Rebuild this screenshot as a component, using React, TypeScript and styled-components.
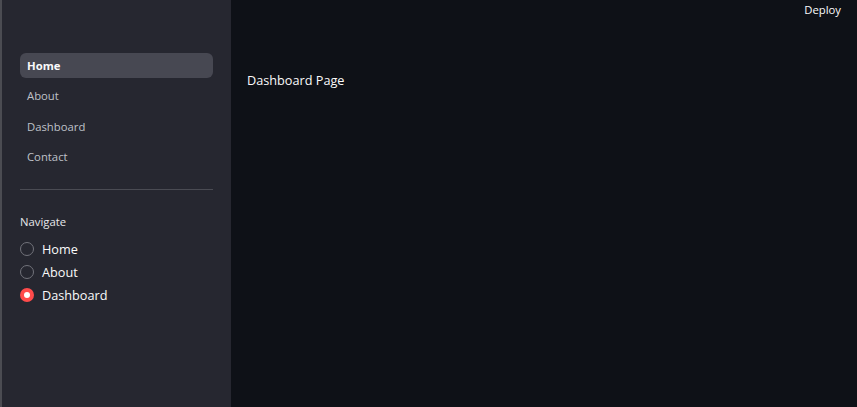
import styled, { createGlobalStyle } from 'styled-components';

const GlobalStyle = createGlobalStyle`
	html, body {
		margin: 0;
		padding: 0;
		height: 100%;
		background: #0e1117;
	}
	#root {
		height: 100%;
	}
	* {
		box-sizing: border-box;
	}
`;

const pages = ['Home', 'About', 'Dashboard', 'Contact'];
const radioOptions = ['Home', 'About', 'Dashboard'];

const App: React.FC = () => {
	const activePage = 'Home';
	const selected = 'Dashboard';

	return (
		<>
			<GlobalStyle />
			<AppWrapper>
				<EdgeStrip />
				<Sidebar>
					<NavList>
						{pages.map(page => (
							<NavItem key={page} $active={page === activePage}>
								{page}
							</NavItem>
						))}
					</NavList>
					<Divider />
					<RadioLabel>Navigate</RadioLabel>
					<RadioGroup>
						{radioOptions.map(option => (
							<RadioRow key={option}>
								<RadioDot $checked={option === selected} />
								<RadioText>{option}</RadioText>
							</RadioRow>
						))}
					</RadioGroup>
				</Sidebar>
				<Main>
					<Header>
						<DeployButton>Deploy</DeployButton>
					</Header>
					<PageTitle>Dashboard Page</PageTitle>
				</Main>
			</AppWrapper>
		</>
	);
};

//Styled Component
const AppWrapper = styled.div`
	display: flex;
	width: 100%;
	height: 407px;
	font-family: 'Open Sans', 'Noto Sans', sans-serif;
	overflow: hidden;
`;

const EdgeStrip = styled.div`
	width: 2px;
	background-color: #4b4c52;
	flex-shrink: 0;
`;

const Sidebar = styled.div`
	width: 229px;
	flex-shrink: 0;
	background-color: #262730;
	padding: 53px 18px 0 18px;
	display: flex;
	flex-direction: column;
`;

const NavList = styled.div`
	display: flex;
	flex-direction: column;
	gap: 6px;
`;

const NavItem = styled.div<{ $active: boolean }>`
	height: 24.5px;
	display: flex;
	align-items: center;
	padding: 0 7px;
	border-radius: 6px;
	font-size: 11.3px;
	font-weight: ${props => (props.$active ? 700 : 400)};
	color: ${props => (props.$active ? '#fafafa' : '#bfc1c8')};
	background-color: ${props => (props.$active ? '#474852' : 'transparent')};
`;

const Divider = styled.div`
	height: 1px;
	background-color: #4a4b53;
	margin-top: 20px;
`;

const RadioLabel = styled.div`
	margin-top: 24px;
	font-size: 11.3px;
	color: #e6e7ea;
`;

const RadioGroup = styled.div`
	display: flex;
	flex-direction: column;
	gap: 5px;
	margin-top: 11px;
`;

const RadioRow = styled.div`
	display: flex;
	align-items: center;
	gap: 8px;
	height: 18px;
`;

const RadioDot = styled.div<{ $checked: boolean }>`
	width: 14px;
	height: 14px;
	border-radius: 50%;
	flex-shrink: 0;
	border: ${props => (props.$checked ? 'none' : '1px solid #72737b')};
	background-color: ${props => (props.$checked ? '#ff4b4b' : 'transparent')};
	display: flex;
	align-items: center;
	justify-content: center;

	&::after {
		content: '';
		display: ${props => (props.$checked ? 'block' : 'none')};
		width: 6px;
		height: 6px;
		border-radius: 50%;
		background-color: #ffffff;
	}
`;

const RadioText = styled.div`
	font-size: 12.7px;
	color: #fafafa;
`;

const Main = styled.div`
	flex: 1;
	background-color: #0e1117;
	display: flex;
	flex-direction: column;
`;

const Header = styled.div`
	display: flex;
	justify-content: flex-end;
	padding: 2px 16px 0 0;
`;

const DeployButton = styled.div`
	font-size: 11.3px;
	color: #fafafa;
	line-height: 16px;
`;

const PageTitle = styled.div`
	margin: 53px 0 0 16px;
	font-size: 12.7px;
	color: #fafafa;
`;

export default App;
